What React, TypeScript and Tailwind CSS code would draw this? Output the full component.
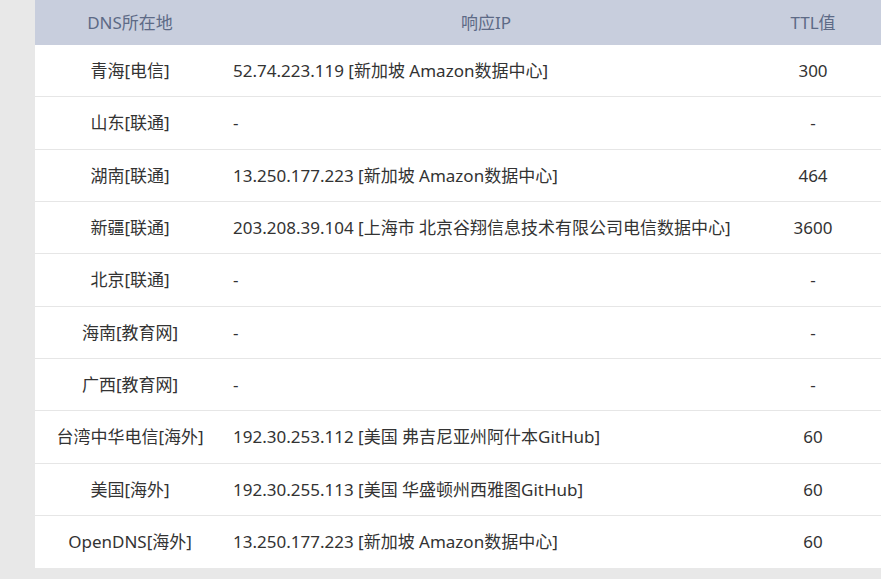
import React from 'react';

const rows = [
  { loc: '青海[电信]', ip: '52.74.223.119 [新加坡 Amazon数据中心]', ttl: '300' },
  { loc: '山东[联通]', ip: '-', ttl: '-' },
  { loc: '湖南[联通]', ip: '13.250.177.223 [新加坡 Amazon数据中心]', ttl: '464' },
  { loc: '新疆[联通]', ip: '203.208.39.104 [上海市 北京谷翔信息技术有限公司电信数据中心]', ttl: '3600' },
  { loc: '北京[联通]', ip: '-', ttl: '-' },
  { loc: '海南[教育网]', ip: '-', ttl: '-' },
  { loc: '广西[教育网]', ip: '-', ttl: '-' },
  { loc: '台湾中华电信[海外]', ip: '192.30.253.112 [美国 弗吉尼亚州阿什本GitHub]', ttl: '60' },
  { loc: '美国[海外]', ip: '192.30.255.113 [美国 华盛顿州西雅图GitHub]', ttl: '60' },
  { loc: 'OpenDNS[海外]', ip: '13.250.177.223 [新加坡 Amazon数据中心]', ttl: '60' },
];

const App: React.FC = () => {
  return (
    <div
      className="min-h-[579px] w-[881px] bg-[#e8e8e8] pl-[35px] overflow-hidden"
      style={{ fontFamily: '"Noto Sans", "Noto Sans CJK SC", sans-serif' }}
    >
      <div className="w-[846px] bg-white text-[17px]">
        {/* 表头 */}
        <div className="grid grid-cols-[190px_522px_132px] h-[45px] items-center bg-[#c8cedd] text-[#5d6a86]">
          <div className="text-center">DNS所在地</div>
          <div className="text-center">响应IP</div>
          <div className="text-center">TTL值</div>
        </div>
        {rows.map((r, i) => (
          <div
            key={i}
            className={`grid grid-cols-[190px_522px_132px] h-[52.33px] items-center text-[#333333] ${i < rows.length - 1 ? 'border-b border-[#e6e6e6]' : ''}`}
          >
            <div className="text-center">{r.loc}</div>
            <div className="pl-2">{r.ip}</div>
            <div className="text-center">{r.ttl}</div>
          </div>
        ))}
      </div>
    </div>
  );
};

export default App;
